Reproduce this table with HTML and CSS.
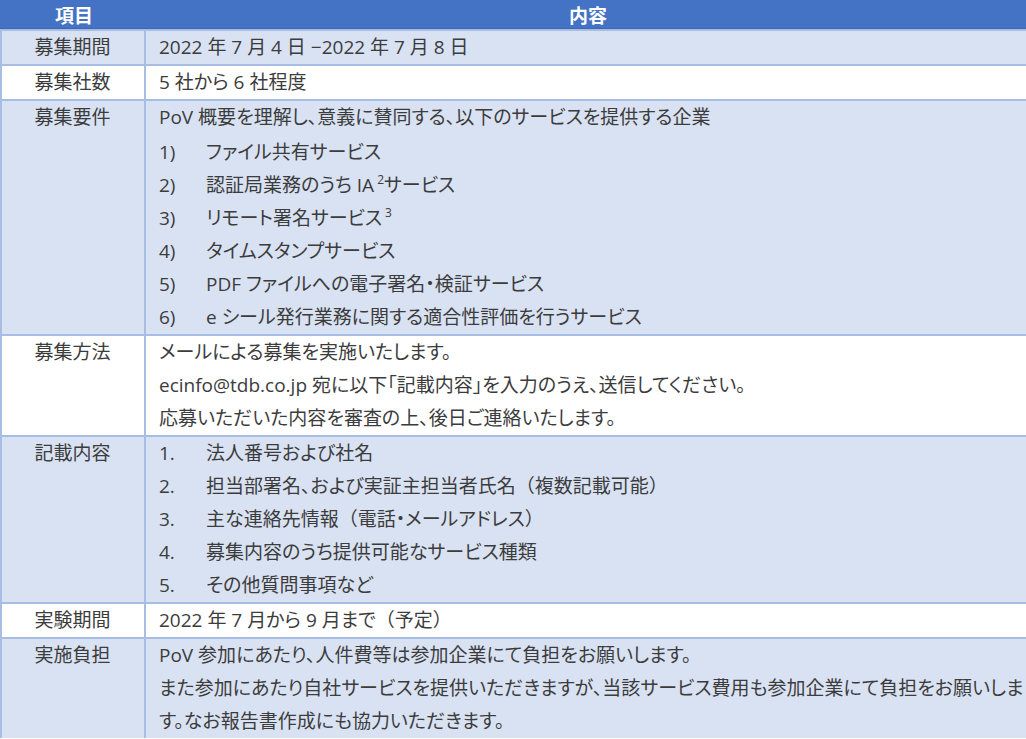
FILE: index.html
```html
<!DOCTYPE html>
<html lang="ja">
<head>
<meta charset="utf-8">
<title>募集要項</title>
<link rel="stylesheet" href="styles.css">
</head>
<body>
<div class="table">
  <div class="row head">
    <div class="label">項目</div>
    <div class="content">内容</div>
  </div>
  <div class="row tint">
    <div class="label">募集期間</div>
    <div class="content"><p>2022 年 7 月 4 日 −2022 年 7 月 8 日</p></div>
  </div>
  <div class="row">
    <div class="label">募集社数</div>
    <div class="content"><p>5 社から 6 社程度</p></div>
  </div>
  <div class="row tint">
    <div class="label">募集要件</div>
    <div class="content">
      <p class="lead">PoV 概要を理解し、意義に賛同する、以下のサービスを提供する企業</p>
      <p class="item"><span class="num">1)</span><span>ファイル共有サービス</span></p>
      <p class="item"><span class="num">2)</span><span>認証局業務のうち IA<sup>2</sup>サービス</span></p>
      <p class="item"><span class="num">3)</span><span>リモート署名サービス<sup>3</sup></span></p>
      <p class="item"><span class="num">4)</span><span>タイムスタンプサービス</span></p>
      <p class="item"><span class="num">5)</span><span>PDF ファイルへの電子署名・検証サービス</span></p>
      <p class="item"><span class="num">6)</span><span>e シール発行業務に関する適合性評価を行うサービス</span></p>
    </div>
  </div>
  <div class="row">
    <div class="label">募集方法</div>
    <div class="content">
      <p>メールによる募集を実施いたします。</p>
      <p>ecinfo@tdb.co.jp 宛に以下「記載内容」を入力のうえ、送信してください。</p>
      <p>応募いただいた内容を審査の上、後日ご連絡いたします。</p>
    </div>
  </div>
  <div class="row tint">
    <div class="label">記載内容</div>
    <div class="content">
      <p class="item"><span class="num">1.</span><span>法人番号および社名</span></p>
      <p class="item"><span class="num">2.</span><span>担当部署名、および実証主担当者氏名<span class="fw">（</span>複数記載可能<span class="fw">）</span></span></p>
      <p class="item"><span class="num">3.</span><span>主な連絡先情報<span class="fw">（</span>電話・メールアドレス<span class="fw">）</span></span></p>
      <p class="item"><span class="num">4.</span><span>募集内容のうち提供可能なサービス種類</span></p>
      <p class="item"><span class="num">5.</span><span>その他質問事項など</span></p>
    </div>
  </div>
  <div class="row">
    <div class="label">実験期間</div>
    <div class="content"><p>2022 年 7 月から 9 月まで<span class="fw">（</span>予定<span class="fw">）</span></p></div>
  </div>
  <div class="row tint">
    <div class="label">実施負担</div>
    <div class="content">
      <p>PoV 参加にあたり、人件費等は参加企業にて負担をお願いします。</p>
      <p>また参加にあたり自社サービスを提供いただきますが、当該サービス費用も参加企業にて負担をお願いしま<br>す。なお報告書作成にも協力いただきます。</p>
    </div>
  </div>
</div>
</body>
</html>
```

FILE: styles.css
```css
html, body {
  margin: 0;
  padding: 0;
  background: #ffffff;
  overflow: hidden;
}

body {
  width: 1026px;
  height: 739px;
  font-family: "Open Sans", "Noto Sans CJK JP", sans-serif;
  font-size: 19px;
  color: #3c3c3c;
}

.table {
  width: 1030px;
  border-left: 2px solid #a8bde4;
  box-sizing: border-box;
}

.row {
  display: grid;
  grid-template-columns: 144px 1fr;
  border-top: 2px solid #a8bde4;
  background: #ffffff;
}

.row.tint {
  background: #d9e2f3;
}

.row.head {
  border-top: none;
  background: #4472c4;
  color: #ffffff;
  font-weight: 700;
  height: 28px;
  line-height: 28px;
  border-bottom: 1px solid #3d66b0;
  margin-left: -2px;
  padding-left: 2px;
}

.row.head .label,
.row.head .content {
  border-right: none;
  text-align: center;
  padding: 0;
}

.label {
  text-align: center;
  line-height: 33px;
  border-right: 2px solid #a8bde4;
  padding-right: 1px;
}

.content {
  padding-left: 13px;
  line-height: 33px;
  font-feature-settings: "palt";
  white-space: nowrap;
}

.content p {
  margin: 0;
}

.content .lead {
  margin-bottom: 2px;
}

.fw {
  font-feature-settings: normal;
}

.item {
  display: flex;
}

.num {
  width: 47px;
  flex: none;
}

sup {
  font-size: 12px;
  line-height: 0;
  vertical-align: 8px;
  margin-left: 3px;
}
```
